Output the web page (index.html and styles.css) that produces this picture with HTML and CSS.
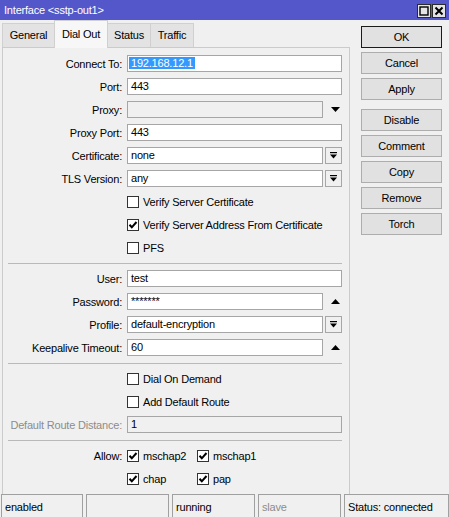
FILE: index.html
```html
<!DOCTYPE html>
<html lang="en">

<head>
    <meta charset="UTF-8">
    <title>Interface &lt;sstp-out1&gt;</title>
    <link rel="stylesheet" href="styles.css">
</head>

<body>
    <div class="titlebar">
        <span class="title">Interface &lt;sstp-out1&gt;</span>
        <div class="winbtns">
            <span class="wb"><svg width="10" height="10" viewBox="0 0 10 10"><rect x="1" y="1" width="8" height="8" fill="none" stroke="#000" stroke-width="1.4"/></svg></span>
            <span class="wb"><svg width="10" height="10" viewBox="0 0 10 10"><path d="M1.5 1.5 L8.5 8.5 M8.5 1.5 L1.5 8.5" stroke="#000" stroke-width="2"/></svg></span>
        </div>
    </div>

    <div class="main">
        <div class="left">
            <div class="tabs">
                <div class="tab t1">General</div>
                <div class="tab t2 active">Dial Out</div>
                <div class="tab t3">Status</div>
                <div class="tab t4">Traffic</div>
            </div>

            <div class="panel">
                <div class="row">
                    <label>Connect To:</label>
                    <div class="field"><span class="sel">192.168.12.1</span></div>
                </div>
                <div class="row">
                    <label>Port:</label>
                    <div class="field">443</div>
                </div>
                <div class="row">
                    <label>Proxy:</label>
                    <div class="field short off"></div>
                    <span class="tri"><svg width="9" height="5" viewBox="0 0 9 5"><polygon points="0,0 9,0 4.5,5" fill="#000"/></svg></span>
                </div>
                <div class="row">
                    <label>Proxy Port:</label>
                    <div class="field">443</div>
                </div>
                <div class="row">
                    <label>Certificate:</label>
                    <div class="field short">none</div>
                    <span class="dd"><svg width="7" height="7" viewBox="0 0 7 7"><rect x="0" y="0" width="7" height="1.2" fill="#000"/><polygon points="0,2.5 7,2.5 3.5,6.5" fill="#000"/></svg></span>
                </div>
                <div class="row">
                    <label>TLS Version:</label>
                    <div class="field short">any</div>
                    <span class="dd"><svg width="7" height="7" viewBox="0 0 7 7"><rect x="0" y="0" width="7" height="1.2" fill="#000"/><polygon points="0,2.5 7,2.5 3.5,6.5" fill="#000"/></svg></span>
                </div>
                <div class="row check">
                    <span class="box"></span>Verify Server Certificate
                </div>
                <div class="row check">
                    <span class="box"><svg width="10" height="10" viewBox="0 0 10 10"><path d="M1.5 4.8 L3.8 7.3 L8.5 2" fill="none" stroke="#000" stroke-width="2"/></svg></span>Verify Server Address From Certificate
                </div>
                <div class="row check">
                    <span class="box"></span>PFS
                </div>

                <div class="sep"></div>

                <div class="row">
                    <label>User:</label>
                    <div class="field">test</div>
                </div>
                <div class="row">
                    <label>Password:</label>
                    <div class="field short">*******</div>
                    <span class="tri"><svg width="9" height="5" viewBox="0 0 9 5"><polygon points="0,5 9,5 4.5,0" fill="#000"/></svg></span>
                </div>
                <div class="row">
                    <label>Profile:</label>
                    <div class="field short">default-encryption</div>
                    <span class="dd"><svg width="7" height="7" viewBox="0 0 7 7"><rect x="0" y="0" width="7" height="1.2" fill="#000"/><polygon points="0,2.5 7,2.5 3.5,6.5" fill="#000"/></svg></span>
                </div>
                <div class="row">
                    <label>Keepalive Timeout:</label>
                    <div class="field short">60</div>
                    <span class="tri"><svg width="9" height="5" viewBox="0 0 9 5"><polygon points="0,5 9,5 4.5,0" fill="#000"/></svg></span>
                </div>

                <div class="sep"></div>

                <div class="row check">
                    <span class="box"></span>Dial On Demand
                </div>
                <div class="row check">
                    <span class="box"></span>Add Default Route
                </div>
                <div class="row">
                    <label class="grey">Default Route Distance:</label>
                    <div class="field off">1</div>
                </div>

                <div class="sep"></div>

                <div class="row">
                    <label>Allow:</label>
                    <div class="opt"><span class="box"><svg width="10" height="10" viewBox="0 0 10 10"><path d="M1.5 4.8 L3.8 7.3 L8.5 2" fill="none" stroke="#000" stroke-width="2"/></svg></span>mschap2</div>
                    <div class="opt"><span class="box"><svg width="10" height="10" viewBox="0 0 10 10"><path d="M1.5 4.8 L3.8 7.3 L8.5 2" fill="none" stroke="#000" stroke-width="2"/></svg></span>mschap1</div>
                </div>
                <div class="row">
                    <label></label>
                    <div class="opt"><span class="box"><svg width="10" height="10" viewBox="0 0 10 10"><path d="M1.5 4.8 L3.8 7.3 L8.5 2" fill="none" stroke="#000" stroke-width="2"/></svg></span>chap</div>
                    <div class="opt"><span class="box"><svg width="10" height="10" viewBox="0 0 10 10"><path d="M1.5 4.8 L3.8 7.3 L8.5 2" fill="none" stroke="#000" stroke-width="2"/></svg></span>pap</div>
                </div>
            </div>
        </div>

        <div class="side">
            <button class="btn default">OK</button>
            <button class="btn">Cancel</button>
            <button class="btn gap">Apply</button>
            <button class="btn">Disable</button>
            <button class="btn">Comment</button>
            <button class="btn">Copy</button>
            <button class="btn">Remove</button>
            <button class="btn">Torch</button>
        </div>
    </div>

    <div class="statusbar">
        <div class="cell">enabled</div>
        <div class="cell"></div>
        <div class="cell">running</div>
        <div class="cell grey">slave</div>
        <div class="cell">Status: connected</div>
    </div>
</body>

</html>
```

FILE: styles.css
```css
/* reset */
html,
body {
    margin: 0;
    padding: 0;
}

body {
    width: 449px;
    height: 517px;
    overflow: hidden;
    background: #f0f0f0;
    color: #000;
    font-family: "Liberation Sans", Arial, sans-serif;
    font-size: 11px;
    letter-spacing: -0.2px;
}

/* title bar */
.titlebar {
    height: 20px;
    box-sizing: border-box;
    padding: 0 3px 0 4px;
    display: flex;
    align-items: center;
    justify-content: space-between;
    background: #5457c9;
    color: #fff;
}

.winbtns {
    display: flex;
    gap: 1px;
    margin-top: 2px;
}

.wb {
    width: 14px;
    height: 14px;
    box-sizing: border-box;
    border: 1px solid #2b2b2b;
    background: #e4e4e4;
    display: flex;
    align-items: center;
    justify-content: center;
}

/* layout */
.main {
    display: flex;
    height: 474px;
}

.left {
    width: 350px;
}

/* tabs */
.tabs {
    height: 27px;
    padding-left: 2px;
    display: flex;
    align-items: flex-end;
}

.tab {
    height: 24px;
    box-sizing: border-box;
    border: 1px solid #d0d0d0;
    border-bottom: none;
    margin-right: -1px;
    background: #e3e3e3;
    text-align: center;
    line-height: 23px;
}

.tab.active {
    height: 28px;
    margin-bottom: -1px;
    position: relative;
    z-index: 1;
    background: #f7f7f7;
    line-height: 26px;
}

.t1 { width: 53px; }
.t2 { width: 54px; }
.t3 { width: 44px; }
.t4 { width: 44px; }

/* panel */
.panel {
    margin-left: 2px;
    width: 348px;
    height: 447px;
    box-sizing: border-box;
    border: 1px solid #cbcbcb;
    border-bottom: none;
    padding-top: 4px;
}

.row {
    height: 23px;
    display: flex;
    align-items: center;
}

.row label {
    width: 119px;
    margin-right: 5px;
    text-align: right;
}

.grey {
    color: #8c8c8c;
}

.field {
    width: 215px;
    height: 17px;
    box-sizing: border-box;
    border: 1px solid #a6a6a6;
    background: #fff;
    padding-left: 3px;
    line-height: 15px;
    white-space: nowrap;
}

.field.short {
    width: 196px;
}

.field.off {
    background: #f0f0f0;
}

.sel {
    display: inline-block;
    margin-left: -2px;
    padding: 0 2px;
    line-height: 12px;
    background: #3399ff;
    color: #fff;
}

.dd {
    width: 17px;
    height: 17px;
    margin-left: 2px;
    box-sizing: border-box;
    border: 1px solid #a6a6a6;
    background: #f0f0f0;
    display: flex;
    align-items: center;
    justify-content: center;
}

.tri {
    width: 24px;
    display: flex;
    justify-content: center;
}

/* checkboxes */
.row.check {
    padding-left: 124px;
}

.box {
    width: 12px;
    height: 12px;
    box-sizing: border-box;
    border: 1px solid #333;
    background: #fff;
    margin-right: 4px;
    display: flex;
    align-items: center;
    justify-content: center;
}

.opt {
    width: 70px;
    display: flex;
    align-items: center;
}

.sep {
    margin: 4px 7px 3px 5px;
    border-top: 1px solid #b9b9b9;
}

/* side buttons */
.side {
    padding: 6px 0 0 11px;
    display: flex;
    flex-direction: column;
    gap: 4px;
}

.btn {
    width: 81px;
    height: 22px;
    padding: 0;
    box-sizing: border-box;
    border: 1px solid #adadad;
    background: #e1e1e1;
    color: #000;
    font: inherit;
    letter-spacing: inherit;
    text-align: center;
}

.btn.default {
    border-color: #1b1b1b;
}

.btn.gap {
    margin-bottom: 5px;
}

/* status bar */
.statusbar {
    height: 23px;
    padding-left: 1px;
    display: grid;
    grid-template-columns: 82px 83px 83px 83px 1fr;
    column-gap: 3px;
}

.cell {
    border: 1px solid #a0a0a0;
    border-bottom: none;
    padding: 5px 0 0 3px;
    line-height: 14px;
    white-space: nowrap;
}
```
